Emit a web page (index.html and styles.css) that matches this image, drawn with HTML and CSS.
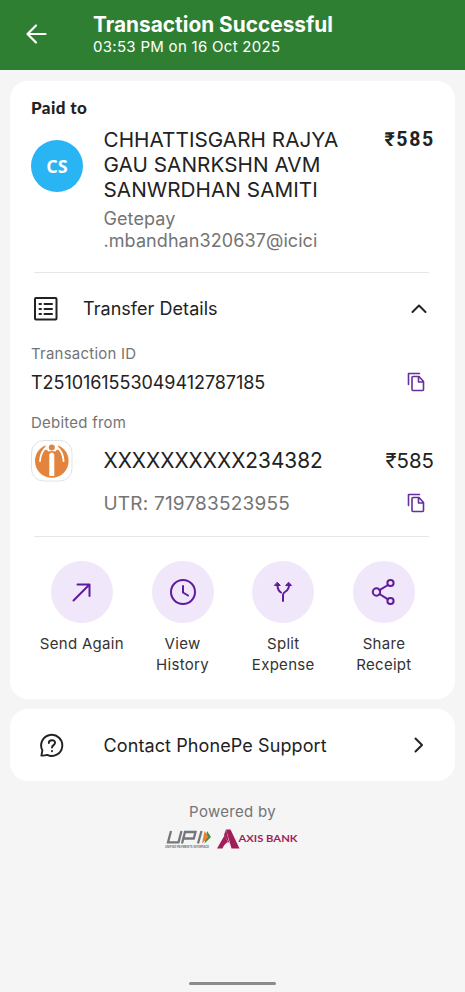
FILE: index.html
```html
<!DOCTYPE html>
<html lang="en">
<head>
<meta charset="utf-8">
<title>Transaction Successful</title>
<link rel="stylesheet" href="styles.css">
</head>
<body>
<header class="topbar">
  <svg class="back" width="24" height="24" viewBox="0 0 24 24"><path d="M21.500 12H3.500M12 3.500L3.500 12l8.500 8.500"/></svg>
  <div>
    <h1>Transaction Successful</h1>
    <p class="when">03:53 PM on 16 Oct 2025</p>
  </div>
</header>
<main>
  <section class="card receipt">
    <h2>Paid to</h2>
    <div class="payee">
      <div class="avatar">CS</div>
      <div class="who">
        <div class="name">CHHATTISGARH RAJYA<br>GAU SANRKSHN AVM<br>SANWRDHAN SAMITI</div>
        <div class="vpa">Getepay<br>.mbandhan320637@icici</div>
      </div>
      <div class="total">₹585</div>
    </div>
    <hr>
    <div class="details-head">
      <svg class="line list" width="24" height="24" viewBox="0 0 24 24"><rect x="1" y="1" width="21.500" height="21.500" rx="1"/><path d="M5.500 7h1.500M10.500 7h7.500M5.500 12h1.500M10.500 12h7.500M5.500 17h1.500M10.500 17h7.500"/></svg>
      <span class="grow">Transfer Details</span>
      <svg class="line" width="18" height="12" viewBox="0 0 18 12"><path d="M2.500 9l6.500-6.500L15.500 9"/></svg>
    </div>
    <div class="label">Transaction ID</div>
    <div class="row txn">
      <span class="grow">T2510161553049412787185</span>
      <svg class="copy" width="18" height="20" viewBox="0 0 18 20"><path d="M1.500 12.500V1.500H12.500M6 4.500h6l4.500 5v8q0 1-1 1H6q-1 0-1-1v-12q0-1 1-1zM11.500 5v5h5"/></svg>
    </div>
    <div class="label from">Debited from</div>
    <div class="row debit">
      <svg class="bank" width="42" height="42" viewBox="0 0 42 42"><rect x=".5" y=".5" width="40.500" height="40.500" rx="12" fill="#fff" stroke="#dfe3e6"/><circle cx="20.800" cy="21" r="16.800" fill="#e3843c"/><path d="M14.500 2h12.600v8h-12.600z" fill="#fff"/><path d="M15.500 7Q9.500 12 9 21M26.100 7Q32.100 12 32.600 21" fill="none" stroke="#fff" stroke-width="1.800"/><path d="M14.500 8h12.600l-2.600 3.500q-3.700-.8-7.400 0z" fill="#fff"/><path d="M18.300 14.500q2.500-4 5 0V36h-5z" fill="#fff"/><circle cx="20.800" cy="7.500" r="3" fill="#e3843c"/></svg>
      <span class="grow">XXXXXXXXXX234382</span>
      <span class="sum">₹585</span>
    </div>
    <div class="row utr">
      <span class="grow">UTR: 719783523955</span>
      <svg class="copy" width="18" height="20" viewBox="0 0 18 20"><path d="M1.500 12.500V1.500H12.500M6 4.500h6l4.500 5v8q0 1-1 1H6q-1 0-1-1v-12q0-1 1-1zM11.500 5v5h5"/></svg>
    </div>
    <hr>
    <div class="actions">
      <div class="action"><div class="disc"><svg width="30" height="30" viewBox="0 0 30 30"><path d="M6.500 23.500L22.500 7.500M10.500 7.500h12v11.500"/></svg></div>Send Again</div>
      <div class="action"><div class="disc"><svg width="30" height="30" viewBox="0 0 30 30"><circle cx="15" cy="15" r="12"/><path d="M15 9v6.500l5 3"/></svg></div>View<br>History</div>
      <div class="action"><div class="disc"><svg width="30" height="30" viewBox="0 0 30 30"><path d="M15 24v-6q0-2 2.500-3.500 3.500-2 3.500-6.500M9.500 8c0 4 1 6 3.500 7.500"/><path class="solid" d="M9.500 5.500l2.800 3H6.700zM20.800 5.500l2.800 3H18z"/></svg></div>Split<br>Expense</div>
      <div class="action"><div class="disc"><svg width="30" height="30" viewBox="0 0 30 30"><path d="M10.500 13.200l8.500-5.200M10.500 17l8.500 5.300"/><circle cx="7.500" cy="15" r="3.700"/><circle cx="21.500" cy="6" r="3.100"/><circle cx="21.500" cy="24" r="3.100"/></svg></div>Share<br>Receipt</div>
    </div>
  </section>
  <section class="card support">
    <svg class="line help" width="25" height="25" viewBox="0 0 26 26"><path d="M2.500 23.500L3.500 18A11 11 0 1 1 8.500 22.800Q5.500 23.800 2.500 23.500zM10.200 10.500c0-4 6.500-4 6.500-.3 0 2.500-3.200 2.300-3.200 5M13.500 18.800v.2"/></svg>
    <span class="grow">Contact PhonePe Support</span>
    <svg class="line" width="12" height="18" viewBox="0 0 12 18"><path d="M2.500 2.500L9 9l-6.500 6.500"/></svg>
  </section>
</main>
<footer>
  <p>Powered by</p>
  <div class="logos">
    <svg width="135" height="22" viewBox="0 0 135 22">
      <g fill="none" stroke="#73777b" stroke-width="2.300" stroke-linecap="butt" stroke-linejoin="miter"><path d="M6 2L3 13.300h10.500L16.500 2M17 14.500L20 3h10.500L28.800 9.500H19M36.500 2L33 14.500"/></g>
      <path d="M42 2l4 6-6.500 6.500z" fill="#3d8f49"/><path d="M39.500 2l4 6-6.500 6.500z" fill="#e88231"/>
      <text class="tiny" x="0" y="19" textLength="44" lengthAdjust="spacingAndGlyphs">UNIFIED PAYMENTS INTERFACE</text>
      <path d="M61 .5h4.500L74.500 19.500H66.500zM59.500 6.500L63 13Q59 15 57.500 19.500H52z" fill="#a01f58"/><path d="M61 .5L59 6l5.500 9z" fill="#a01f58"/>
      <text class="axis" x="73.500" y="13" textLength="59" lengthAdjust="spacingAndGlyphs">AXIS BANK</text>
    </svg>
  </div>
</footer>
<div class="home"></div>
</body>
</html>
```
FILE: styles.css
```css
* { box-sizing: border-box; margin: 0; padding: 0; }
body { height: 992px; display: flex; flex-direction: column; background: #f5f5f5; color: #222; font-family: Inter, "Liberation Sans", sans-serif; overflow: hidden; }
svg { display: block; flex: none; fill: none; stroke-linecap: round; stroke-linejoin: round; }
.topbar { height: 70px; flex: none; display: flex; background: #2f7f33; color: #fff; padding: 12px 24px; }
.back { margin: 10px 45px 0 0; stroke: #fff; stroke-width: 2.2; }
h1 { font-size: 20.800px; line-height: 26px; font-weight: 700; letter-spacing: .03px; }
.when { font-size: 15px; line-height: 18px; letter-spacing: .29px; }
main { padding: 11px 10px 0; display: flex; flex-direction: column; gap: 10px; }
.card { background: #fff; border-radius: 18px; padding: 0 21px; }
.receipt { height: 618px; padding-top: 16px; }
h2 { font: 900 17px/22px Lato, sans-serif; letter-spacing: .4px; }
.payee { display: flex; margin-top: 8px; }
.avatar { width: 52px; height: 52px; margin: 13px 20.500px 0 0; border-radius: 50%; background: #29b4f4; color: #fff; font: 700 18px/52px "Open Sans", sans-serif; text-align: center; }
.who { flex: 1; }
.name { font-size: 20.700px; line-height: 25px; letter-spacing: .05px; white-space: nowrap; }
.vpa { margin-top: 6px; font-size: 18px; line-height: 22px; letter-spacing: .08px; color: #747474; }
.total { font: 700 19.500px/25px Roboto, sans-serif; letter-spacing: 1.700px; margin-right: -1px; }
hr { border: 0; height: 1px; background: #e6e6e6; margin: 20px 5px 0 3px; }
.grow { flex: 1; }
.line { stroke: #222; stroke-width: 2; }
.list { margin-left: 3px; }
.details-head { display: flex; align-items: center; height: 25px; margin-top: 23px; padding-right: 6px; font-size: 18px; gap: 25px; letter-spacing: .05px; }
.label { margin-top: 24px; font-size: 15px; line-height: 18px; color: #747474; letter-spacing: .23px; }
.row { display: flex; align-items: center; }
.copy { stroke: #652f9c; stroke-width: 1.6; margin-right: 9px; }
.txn { height: 24px; margin-top: 7px; font-size: 18px; letter-spacing: -.05px; }
.from { margin-top: 20px; }
.debit { height: 42px; margin-top: 7px; gap: 30.500px; font-size: 20.800px; }
.bank { position: relative; top: 1px; }
.sum { font-size: 20.400px; }
.utr { height: 26px; margin-top: 9px; padding-left: 72.500px; font-size: 19px; letter-spacing: .2px; color: #747474; }
.actions { display: grid; grid-template-columns: repeat(4, 100.700px); margin: 24px -2px 0 .5px; text-align: center; font-size: 15px; line-height: 21px; letter-spacing: .3px; color: #333; }
.disc { width: 62px; height: 62px; border-radius: 50%; margin: 0 auto 10px; background: #f1e7fb; display: grid; place-items: center; }
.disc svg { stroke: #5e1b9e; stroke-width: 2; }
.disc .solid { fill: #5e1b9e; stroke-width: 1; }
.support { height: 72px; display: flex; align-items: center; padding: 0 30px 0 29px; font-size: 18px; letter-spacing: .1px; }
.help { margin-right: 39.500px; }
footer { margin-top: 21px; text-align: center; font-size: 15px; line-height: 20px; letter-spacing: .3px; color: #747474; }
.logos { display: flex; justify-content: center; margin: 7px 1px 0 0; }
.tiny { font-size: 3.500px; font-weight: 700; letter-spacing: 0; fill: #777; }
.axis { font: 700 10px Lato, sans-serif; letter-spacing: 0; fill: #a01f58; }
.home { width: 87px; height: 3px; border-radius: 2px; background: #8b8b8b; margin: auto auto 7px; flex: none; }
```
